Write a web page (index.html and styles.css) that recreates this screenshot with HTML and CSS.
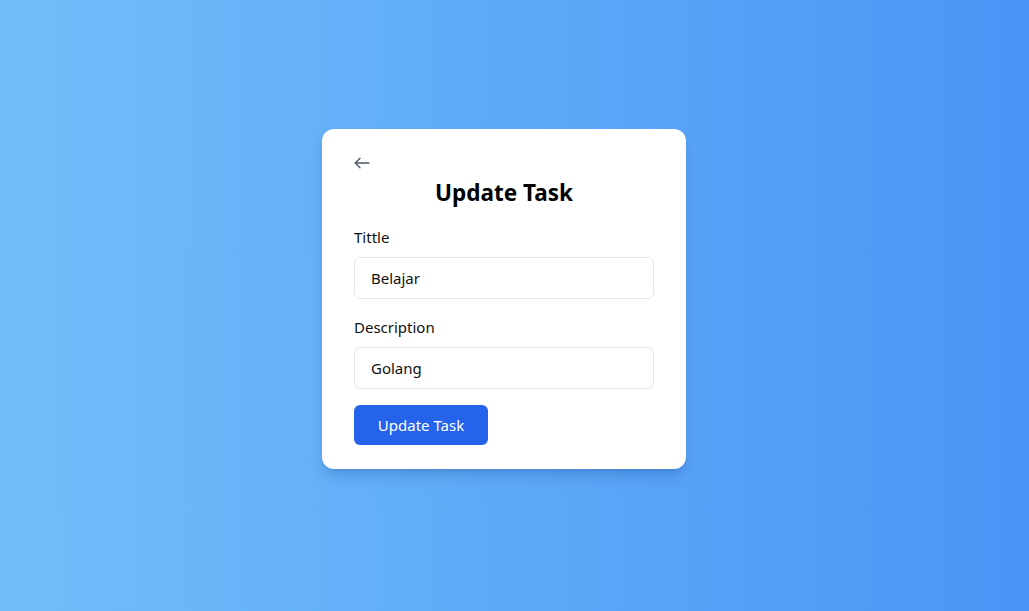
FILE: index.html
```html
<!DOCTYPE html>
<html lang="en">
<head>
<meta charset="utf-8">
<title>Update Task</title>
<link rel="stylesheet" href="styles.css">
</head>
<body>
<main class="page">
  <form class="card">
    <button type="button" class="back" aria-label="Back">
      <svg width="16" height="12" viewBox="0 0 16 12" fill="none" stroke="#4b5563" stroke-width="1.3" stroke-linecap="round" stroke-linejoin="round"><path d="M15 6H1.5M6 1.2L1.2 6 6 10.8"/></svg>
    </button>
    <h1 class="title">Update Task</h1>
    <div class="field">
      <label class="label" for="title">Tittle</label>
      <input class="input" id="title" type="text" value="Belajar">
    </div>
    <div class="field">
      <label class="label" for="desc">Description</label>
      <input class="input" id="desc" type="text" value="Golang">
    </div>
    <button type="button" class="submit">Update Task</button>
  </form>
</main>
</body>
</html>
```
FILE: styles.css
```css
* { box-sizing: border-box; }
html, body { margin: 0; height: 100%; }
body {
  font-family: "Noto Sans", "Open Sans", sans-serif;
  background: linear-gradient(to right, #72bef9, #4a94f6);
}
.page {
  height: 100vh;
  display: flex;
  align-items: center;
  justify-content: center;
  padding-right: 21px;
  padding-bottom: 13px;
}
.card {
  width: 364px;
  background: #fff;
  border-radius: 12px;
  padding: 24px 32px 24px;
  box-shadow: 0 10px 15px -3px rgba(0, 40, 120, 0.18), 0 4px 6px -4px rgba(0, 40, 120, 0.18);
  display: flex;
  flex-direction: column;
}
.back {
  align-self: flex-start;
  border: 0;
  background: none;
  padding: 0;
  height: 24px;
  display: flex;
  align-items: center;
  cursor: pointer;
  margin-top: -2px;
  margin-bottom: 2px;
}
.title {
  margin: 0 0 16px;
  text-align: center;
  font-size: 22.5px;
  line-height: 32px;
  font-weight: 700;
  color: #000;
}
.field {
  display: flex;
  flex-direction: column;
  margin-bottom: 16px;
}
.label {
  font-size: 15px;
  line-height: 24px;
  color: #111;
  margin-bottom: 8px;
}
.input {
  height: 42px;
  border: 1px solid #e5e7eb;
  border-radius: 6px;
  padding: 0 16px;
  font: inherit;
  font-size: 15px;
  color: #111;
  background: #fff;
  outline: none;
}
.submit {
  align-self: flex-start;
  width: 134px;
  height: 40px;
  border: 0;
  border-radius: 6px;
  background: #2563eb;
  color: #fff;
  font: inherit;
  font-size: 15px;
  cursor: pointer;
}
```
